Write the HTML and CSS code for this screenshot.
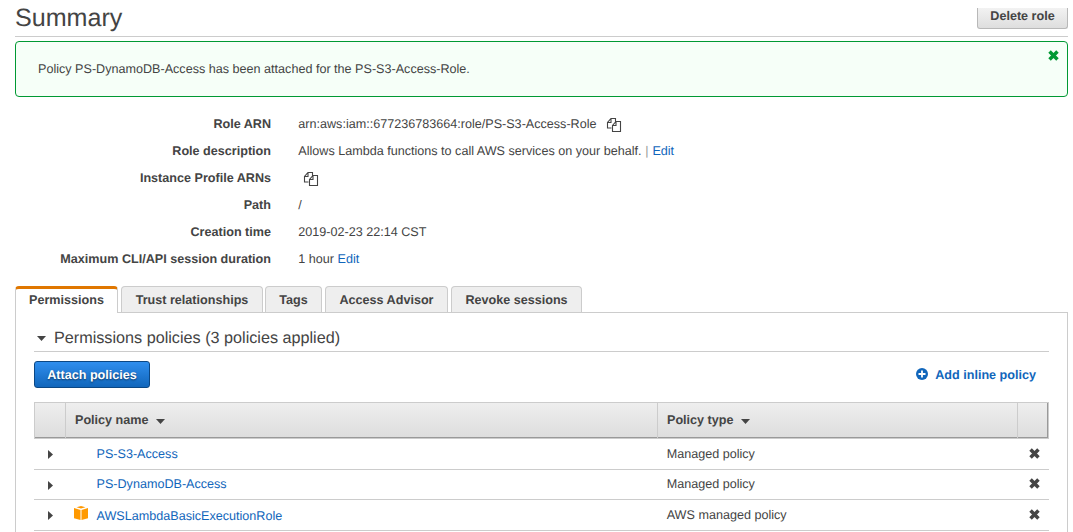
FILE: index.html
```html
<!DOCTYPE html>
<html lang="en">
<head>
<meta charset="utf-8">
<title>Summary</title>
<link rel="stylesheet" href="styles.css">
</head>
<body>
<svg class="defs" width="0" height="0">
  <symbol id="copy" viewBox="0 0 16 16"><path d="M5.500 11H1.500V5.500L5 1.500H9.500V5M1.500 5.500H5V1.500M6.500 14.500V8.500L10 4.500H14.500V14.500ZM6.500 8.500H10V4.500" fill="none" stroke="#444" stroke-width="1.100"/></symbol>
  <symbol id="cross" viewBox="0 0 10 10"><path d="M1.400 1.400L8.600 8.600M8.600 1.400L1.400 8.600" fill="none" stroke="currentColor" stroke-width="3.200"/></symbol>
  <symbol id="down" viewBox="0 0 9 5"><path d="M0 0H9L4.500 5Z" fill="#444"/></symbol>
  <symbol id="right" viewBox="0 0 5 9"><path d="M0 0L5 4.500L0 9Z" fill="#444"/></symbol>
</svg>
<main class="page">
  <header class="header">
    <h1 class="title">Summary</h1>
    <button class="delete">Delete role</button>
  </header>
  <div class="alert">
    <span>Policy PS-DynamoDB-Access has been attached for the PS-S3-Access-Role.</span>
    <svg class="alert-close"><use href="#cross"/></svg>
  </div>
  <dl class="details">
    <dt>Role ARN</dt><dd class="with-icon">arn:aws:iam::677236783664:role/PS-S3-Access-Role<svg class="copy copy-after"><use href="#copy"/></svg></dd>
    <dt>Role description</dt><dd>Allows Lambda functions to call AWS services on your behalf. <span class="bar">|</span> <a>Edit</a></dd>
    <dt>Instance Profile ARNs</dt><dd class="with-icon"><svg class="copy"><use href="#copy"/></svg></dd>
    <dt>Path</dt><dd>/</dd>
    <dt>Creation time</dt><dd>2019-02-23 22:14 CST</dd>
    <dt>Maximum CLI/API session duration</dt><dd>1 hour <a>Edit</a></dd>
  </dl>
  <nav class="tabs">
    <a class="tab tab-active">Permissions</a>
    <a class="tab tab-trust">Trust relationships</a>
    <a class="tab tab-tags">Tags</a>
    <a class="tab tab-access">Access Advisor</a>
    <a class="tab tab-revoke">Revoke sessions</a>
  </nav>
  <section class="panel">
    <h2 class="section-title"><svg class="down"><use href="#down"/></svg>Permissions policies (3 policies applied)</h2>
    <div class="actions">
      <button class="attach">Attach policies</button>
      <a class="inline-policy"><svg class="plus" viewBox="0 0 12 12"><circle cx="6" cy="6" r="6"/><path d="M6 2.500V9.500M2.500 6H9.500" stroke="#fff" stroke-width="1.800"/></svg>Add inline policy</a>
    </div>
    <div class="grid head">
      <div></div>
      <div>Policy name<svg class="down"><use href="#down"/></svg></div>
      <div>Policy type<svg class="down"><use href="#down"/></svg></div>
      <div></div>
    </div>
    <div class="grid row">
      <div class="expand"><svg><use href="#right"/></svg></div>
      <div class="name"><a>PS-S3-Access</a></div>
      <div class="type">Managed policy</div>
      <div class="remove"><svg><use href="#cross"/></svg></div>
    </div>
    <div class="grid row row-short">
      <div class="expand"><svg><use href="#right"/></svg></div>
      <div class="name"><a>PS-DynamoDB-Access</a></div>
      <div class="type">Managed policy</div>
      <div class="remove"><svg><use href="#cross"/></svg></div>
    </div>
    <div class="grid row row-aws">
      <div class="expand"><svg><use href="#right"/></svg></div>
      <div class="name"><svg class="cube" viewBox="0 0 14 14"><path d="M7 0L11.500 1.200L7 2.500L2.500 1.200ZM0 2L6.500 4V14L0 12.300ZM14 2L7.500 4V14L14 12.300Z" fill="#f90"/></svg><a>AWSLambdaBasicExecutionRole</a></div>
      <div class="type">AWS managed policy</div>
      <div class="remove"><svg><use href="#cross"/></svg></div>
    </div>
  </section>
</main>
</body>
</html>
```
FILE: styles.css
```css
* { box-sizing: border-box; }
body {
  margin: 0;
  height: 532px;
  overflow: hidden;
  background: #fff;
  color: #444;
  font: 12.6px/18px "Liberation Sans", Arial, sans-serif;
  text-rendering: geometricPrecision;
}
svg { display: block; flex: none; }
.defs { position: absolute; }
a { color: #1166bb; }
.page { width: 1053px; margin-left: 15px; }
.header {
  height: 37px;
  padding-top: 8px;
  display: flex;
  justify-content: space-between;
  align-items: flex-start;
  border-bottom: 1px solid #ccc;
}
.title { margin: -4px 0 0; font-size: 25.1px; line-height: 29px; font-weight: 400; }
.delete {
  width: 91px;
  height: 21px;
  padding: 0 0 4px;
  border: 1px solid #b8b8b8;
  border-top: 0;
  border-radius: 0 0 3px 3px;
  background: linear-gradient(#f2f2f2, #dedede);
  color: #444;
  font: bold 12.6px/16px "Liberation Sans", Arial, sans-serif;
  text-rendering: inherit;
}
.alert {
  height: 56px;
  margin-top: 4px;
  padding: 8px 8px 0 22px;
  display: flex;
  justify-content: space-between;
  border: 1px solid #093;
  border-radius: 4px;
  background: #f6fff8;
}
.alert span { margin-top: 10px; }
.alert-close { width: 11px; height: 11px; color: #093; }
.details {
  margin: 14px 0 0;
  display: grid;
  grid-template-columns: 256px 1fr;
  column-gap: 27px;
  grid-auto-rows: 27px;
  line-height: 26px;
}
.details dt { text-align: right; font-weight: 700; }
.details dd { margin: 0; padding-left: 0.3px; }
.details .with-icon { display: flex; }
.details .copy { width: 16px; height: 16px; margin: 6px 0 0 5px; }
.details .copy-after { margin-left: 9px; }
.bar { color: #999; margin: 0 0.3px; }
.tabs { height: 27px; margin-top: 13px; display: flex; }
.tab {
  height: 26px;
  margin-right: 3px;
  border: 1px solid #ccc;
  border-bottom: 0;
  border-radius: 4px 4px 0 0;
  background: #eee;
  color: #444;
  font-weight: 700;
  line-height: 26px;
  text-align: center;
}
.tab-active { width: 103px; height: 27px; border-top: 3px solid #e07700; background: #fff; line-height: 22px; position: relative; }
.tab-trust { width: 142px; margin-right: 2px; }
.tab-tags { width: 57px; }
.tab-access { width: 123px; }
.tab-revoke { width: 131px; }
.panel {
  height: 230px;
  margin-top: -1px;
  padding: 12px 18px 0;
  border: 1px solid #ccc;
}
.section-title {
  height: 27px;
  margin: 0;
  padding-left: 3px;
  display: flex;
  gap: 8px;
  border-bottom: 1px solid #ccc;
  font-size: 16.2px;
  line-height: 27px;
  font-weight: 400;
}
.down { width: 9px; height: 5px; }
.section-title .down { margin-top: 11px; }
.actions { height: 50px; padding-top: 9px; display: flex; justify-content: space-between; }
.attach {
  width: 116px;
  height: 27px;
  padding: 1px 0 0;
  border: 1px solid #0b4784;
  border-radius: 3px;
  background: linear-gradient(#2f8eee, #1166bb);
  color: #fff;
  font: bold 12.6px/24px "Liberation Sans", Arial, sans-serif;
  text-rendering: inherit;
  text-shadow: 0 1px 2px #0008;
}
.inline-policy { margin-right: 13px; display: flex; gap: 7px; font-weight: 700; line-height: 28px; }
.plus { width: 12px; height: 12px; margin-top: 7px; }
.plus circle { fill: #1166bb; }
.grid { display: grid; grid-template-columns: 32px 592px 360px 31px; }
.head {
  height: 37px;
  border: 1px solid #ccc;
  background: linear-gradient(#eee, #ddd);
  box-shadow: inset -1px -1px #999;
  font-weight: 700;
  line-height: 34px;
  grid-template-columns: 31px 592px 360px 1fr;
}
.head div { display: flex; gap: 7px; padding-left: 9px; border-right: 1px solid #ccc; }
.head div:last-child { border: 0; }
.head .down { margin-top: 16px; }
.row { height: 31px; border-bottom: 1px solid #ccc; line-height: 30px; }
.row-short { height: 30px; line-height: 28px; }
.row-aws { height: 31px; line-height: 30px; }
.expand svg { width: 5px; height: 9px; margin: 11px 0 0 14px; }
.name { display: grid; grid-template-columns: 30.5px 1fr; }
.name a { grid-column: 2; }
.row-aws .name a { padding-top: 1px; }
.cube { width: 14px; height: 14px; margin: 6px 0 0 8px; }
.type { padding-left: 8.7px; }
.remove svg { width: 11px; height: 11px; margin: 9px 0 0 11px; color: #444; }
.row-short .remove svg { margin-top: 8px; }
```
